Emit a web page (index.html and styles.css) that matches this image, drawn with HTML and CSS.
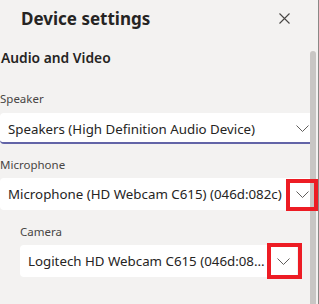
FILE: index.html
```html
<!DOCTYPE html>
<html>
<head>
<meta charset="utf-8">
<link rel="stylesheet" href="styles.css">
</head>
<body>
<div class="panel">
  <div class="content">
    <header class="header">
      <h1 class="title">Device settings</h1>
      <button class="close" aria-label="Close">
        <svg width="11" height="11" viewBox="0 0 11 11"><path d="M0.5 0.5 L10.5 10.5 M10.5 0.5 L0.5 10.5" stroke="#484644" stroke-width="1.1" fill="none"/></svg>
      </button>
    </header>
    <h2 class="section">Audio and Video</h2>

    <div class="field field-speaker">
      <div class="label">Speaker</div>
      <div class="select select-active">
        <span class="value">Speakers (High Definition Audio Device)</span>
        <svg class="chev" width="13" height="7" viewBox="0 0 13 7"><polyline points="0.5,0.5 6.5,6.5 12.5,0.5" stroke="#605e5c" stroke-width="1" fill="none"/></svg>
      </div>
    </div>

    <div class="field">
      <div class="label">Microphone</div>
      <div class="select">
        <span class="value">Microphone (HD Webcam C615) (046d:082c)</span>
        <svg class="chev" width="13" height="7" viewBox="0 0 13 7"><polyline points="0.5,0.5 6.5,6.5 12.5,0.5" stroke="#605e5c" stroke-width="1" fill="none"/></svg>
        <span class="mark mark-mic"></span>
      </div>
    </div>

    <div class="field field-indent">
      <div class="label">Camera</div>
      <div class="select select-narrow">
        <span class="value">Logitech HD Webcam C615 (046d:08...</span>
        <svg class="chev" width="13" height="7" viewBox="0 0 13 7"><polyline points="0.5,0.5 6.5,6.5 12.5,0.5" stroke="#605e5c" stroke-width="1" fill="none"/></svg>
        <span class="mark mark-cam"></span>
      </div>
    </div>
  </div>
  <div class="rail"><div class="thumb"></div></div>
</div>
</body>
</html>
```

FILE: styles.css
```css
* { box-sizing: border-box; }
html, body {
  margin: 0;
  padding: 0;
  background: #f3f2f1;
  width: 319px;
  height: 304px;
  overflow: hidden;
}
body {
  font-family: "Noto Sans", "Open Sans", sans-serif;
  color: #252423;
}
.panel {
  display: flex;
  height: 304px;
}
.content {
  width: 310px;
  flex: none;
}
.header {
  display: flex;
  justify-content: space-between;
  align-items: center;
  padding: 5px 21px 0 21px;
  height: 33px;
}
.title {
  margin: 0;
  font-size: 17px;
  line-height: 24px;
  font-weight: 700;
  color: #252423;
}
.close {
  border: 0;
  background: none;
  padding: 0;
  width: 11px;
  height: 11px;
  display: flex;
  margin-top: -1px;
  margin-right: -1px;
}
.section {
  margin: 15px 0 0 1px;
  font-size: 13.8px;
  line-height: 20px;
  font-weight: 600;
}
.field {
  display: flex;
  flex-direction: column;
  margin-top: 13px;
}
.field-speaker { margin-top: 23px; }
.label {
  font-size: 11.5px;
  line-height: 16px;
  color: #484644;
  height: 21px;
}
.field-speaker .label { height: 22px; }
.select {
  position: relative;
  display: flex;
  align-items: center;
  justify-content: space-between;
  width: 316px;
  height: 32px;
  background: #ffffff;
  border-radius: 4px;
  padding: 0 7px 0 8px;
  font-size: 13.3px;
  color: #252423;
}
.select-active {
  height: 31px;
  border-bottom: 2px solid #6264a7;
  padding-top: 2px;
}
.field-indent { padding-left: 20px; margin-top: 14px; }
.select-narrow { width: 277px; }
.value { white-space: nowrap; }
.chev { flex: none; }
.mark {
  position: absolute;
  z-index: 3;
  border: 4px solid #ed1c24;
}
.mark-mic {
  right: -2px;
  top: 1px;
  width: 32px;
  height: 32px;
}
.mark-cam {
  right: -5px;
  top: -2px;
  width: 35px;
  height: 36px;
}
.rail {
  width: 9px;
  flex: none;
  position: relative;
  z-index: 2;
  display: flex;
  border-right: 1px solid #8a8886;
  background: #f3f2f1;
}
.thumb {
  margin-top: 51px;
  width: 6px;
  height: 253px;
  background: #c8c6c4;
  border-radius: 3px 3px 0 0;
}
```
